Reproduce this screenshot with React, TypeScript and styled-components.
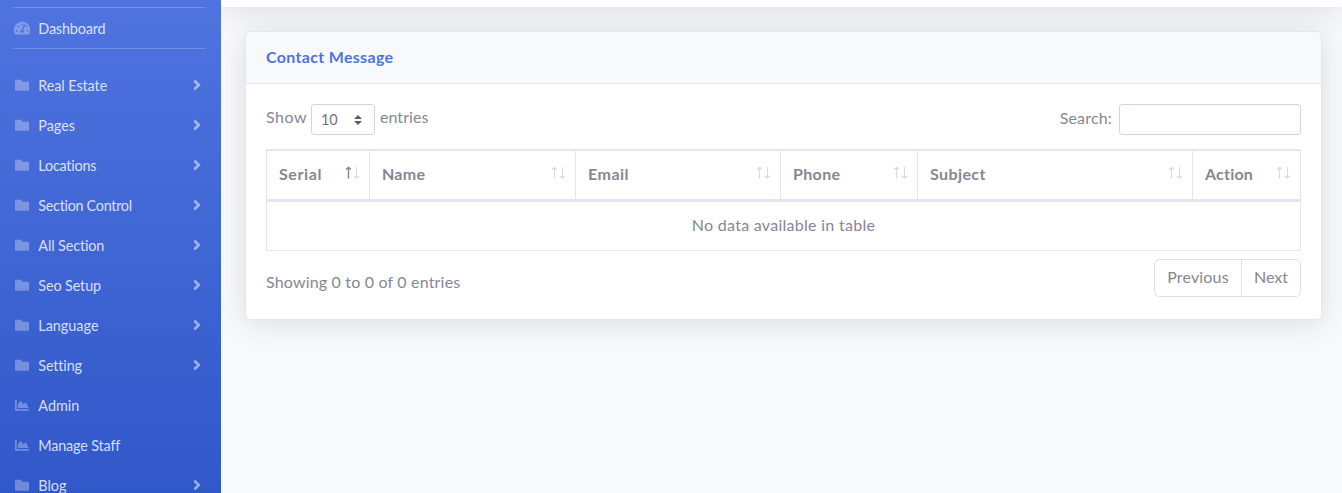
import React from 'react';
import styled, { createGlobalStyle, css } from 'styled-components';
import { FaAngleRight, FaChartArea, FaFolder, FaTachometerAlt } from 'react-icons/fa';

const GlobalStyle = createGlobalStyle`
  *, *::before, *::after { box-sizing: border-box; }
  body {
    margin: 0;
    background: #f8f9fc;
    color: #858796;
    font: 400 16px/24px Lato, 'Open Sans', sans-serif;
    font-variant-ligatures: none;
    overflow: hidden;
  }
`;

const Page = styled.div`
  display: flex;
  height: 493px;
  overflow: hidden;
`;

const Sidebar = styled.nav`
  flex: 0 0 221px;
  padding: 7px 0 0;
  background: linear-gradient(180deg, #4e73df 17px, #224abe 737px);
`;

const Divider = styled.hr<{ $gap?: number }>`
  height: 1px;
  margin: 0 16px ${p => p.$gap ?? 0}px 13px;
  border: 0;
  background: rgba(255, 255, 255, 0.2);
`;

const NavItem = styled.a<{ $tracking?: number }>`
  display: flex;
  align-items: center;
  height: 40px;
  padding: 0 16px 0 13px;
  color: rgba(255, 255, 255, 0.8);
  font-size: 14.4px;
  line-height: 20px;
  letter-spacing: ${p => p.$tracking ?? 0}px;
`;

const NavLabel = styled.span`
  padding-top: 1px;
`;

const NavIcon = styled.span<{ $size?: number }>`
  display: flex;
  justify-content: center;
  width: 18px;
  margin-right: 7.3px;
  color: rgba(255, 255, 255, 0.3);
  font-size: ${p => p.$size ?? 14.6}px;
`;

const Chevron = styled(FaAngleRight)`
  margin-left: auto;
  color: rgba(255, 255, 255, 0.5);
  stroke: rgba(255, 255, 255, 0.15);
  stroke-width: 14px;
  font-size: 16px;
`;

const Content = styled.main`
  flex: 1;
  min-width: 0;
  overflow: hidden;
`;

const Topbar = styled.header`
  height: 70px;
  margin: -63px 0 24px;
  background: #fff;
  box-shadow: 0 2.4px 28px 0 rgba(58, 59, 69, 0.15);
`;

const Card = styled.section`
  height: 289px;
  margin: 0 20px 0 24px;
  border: 1px solid #e3e6f0;
  border-radius: 5.6px;
  background: #fff;
  box-shadow: 0 2.4px 28px 0 rgba(58, 59, 69, 0.15);
`;

const CardHeader = styled.h6`
  height: 52px;
  margin: 0;
  padding: 13px 20px;
  border-bottom: 1px solid #e3e6f0;
  border-radius: 4.6px 4.6px 0 0;
  background: #f8f9fc;
  color: #4e73df;
  font-size: 16px;
  font-weight: 700;
`;

const CardBody = styled.div`
  padding: 20px;
`;

const Bar = styled.div`
  display: flex;
  justify-content: space-between;
`;

const Field = styled.label`
  display: flex;
  align-items: flex-start;
  height: 45px;
`;

const Text = styled.span<{ $tracking?: number; $top?: number }>`
  margin-top: ${p => p.$top ?? 0}px;
  letter-spacing: ${p => p.$tracking ?? 0}px;
  white-space: nowrap;
`;

const control = css`
  height: 31px;
  border: 1px solid #d1d3e2;
  border-radius: 3.2px;
  background: #fff;
`;

const Select = styled.span`
  ${control}
  display: flex;
  align-items: center;
  justify-content: space-between;
  width: 64px;
  margin: 0 5px 0 4px;
  padding: 0 12px 0 9px;
  color: #6e707e;
  font-size: 14.4px;
`;

const Search = styled.input`
  ${control}
  width: 182px;
  margin-left: 7px;
`;

const Table = styled.table`
  width: 1035px;
  border: 1px solid #e3e6f0;
  border-spacing: 0;
  border-collapse: collapse;
  table-layout: fixed;
`;

const Th = styled.th<{ $w: number }>`
  width: ${p => p.$w}px;
  height: 50px;
  padding: 0 9px 1px 12px;
  border: 1px solid #e3e6f0;
  border-top-width: 2px;
  border-bottom-width: 3px;
  text-align: left;
`;

const ThInner = styled.div`
  display: flex;
  justify-content: space-between;
`;

const Arrows = styled.svg`
  margin-top: 4px;
`;

const Td = styled.td`
  height: 50px;
  padding: 0 0 1px;
  border: 1px solid #e3e6f0;
  text-align: center;
`;

const Pager = styled.div`
  display: flex;
  height: 38px;
  margin-top: 8px;
  border: 1px solid #dddfeb;
  border-radius: 5.6px;
`;

const PageLink = styled.a<{ $w: number }>`
  width: ${p => p.$w}px;
  padding-top: 5px;
  text-align: center;
  & + & { border-left: 1px solid #dddfeb; }
`;

const SortArrows = ({ active }: { active?: boolean }) => (
  <Arrows width="16" height="14" viewBox="0 0 16 14" fill="none" stroke="#858796">
    <path d="M4.5 12.5V1.5M2 3.5L4.5 1.5L7 3.5" strokeWidth={active ? 1.4 : 1.2} opacity={active ? 1 : 0.3} />
    <path d="M12.5 1V12M10 10L12.5 12L15 10" strokeWidth="1.2" opacity="0.3" />
  </Arrows>
);

const items = [
  { label: 'Real Estate', tracking: -0.08, folder: true },
  { label: 'Pages', tracking: 0, folder: true },
  { label: 'Locations', tracking: -0.22, folder: true },
  { label: 'Section Control', tracking: -0.3, folder: true },
  { label: 'All Section', tracking: -0.12, folder: true },
  { label: 'Seo Setup', tracking: -0.12, folder: true },
  { label: 'Language', tracking: 0, folder: true },
  { label: 'Setting', tracking: -0.15, folder: true },
  { label: 'Admin', tracking: 0, folder: false },
  { label: 'Manage Staff', tracking: -0.17, folder: false },
  { label: 'Blog', tracking: 0, folder: true },
];

const columns = [
  { label: 'Serial', width: 103, tracking: 0.6 },
  { label: 'Name', width: 206, tracking: 0.25 },
  { label: 'Email', width: 205, tracking: 0.5 },
  { label: 'Phone', width: 137, tracking: 0.35 },
  { label: 'Subject', width: 275, tracking: 0.4 },
  { label: 'Action', width: 108, tracking: 0.2 },
];

export default function App() {
  return (
    <Page>
      <GlobalStyle />
      <Sidebar>
        <Divider />
        <NavItem $tracking={-0.17}>
          <NavIcon $size={16.2}><FaTachometerAlt /></NavIcon>
          <NavLabel>Dashboard</NavLabel>
        </NavItem>
        <Divider $gap={16} />
        {items.map(i => (
          <NavItem key={i.label} $tracking={i.tracking}>
            <NavIcon>{i.folder ? <FaFolder /> : <FaChartArea />}</NavIcon>
            <NavLabel>{i.label}</NavLabel>
            {i.folder && <Chevron />}
          </NavItem>
        ))}
      </Sidebar>
      <Content>
        <Topbar />
        <Card>
          <CardHeader><Text $tracking={0.32}>Contact Message</Text></CardHeader>
          <CardBody>
            <Bar>
              <Field>
                <Text $tracking={0.5} $top={1}>Show</Text>
                <Select>
                  10
                  <svg width="8" height="10" viewBox="0 0 4 5" fill="#5a5c69"><path d="M2 0L0 2h4zm0 5L0 3h4z" /></svg>
                </Select>
                <Text $tracking={0.05} $top={1}>entries</Text>
              </Field>
              <Field><Text $tracking={0.18} $top={2}>Search:</Text><Search /></Field>
            </Bar>
            <Table>
              <thead>
                <tr>
                  {columns.map((c, n) => (
                    <Th key={c.label} $w={c.width}>
                      <ThInner><Text $tracking={c.tracking}>{c.label}</Text><SortArrows active={n === 0} /></ThInner>
                    </Th>
                  ))}
                </tr>
              </thead>
              <tbody><tr><Td colSpan={6}><Text $tracking={0.28}>No data available in table</Text></Td></tr></tbody>
            </Table>
            <Bar>
              <Text $tracking={0.18} $top={19}>Showing 0 to 0 of 0 entries</Text>
              <Pager>
                <PageLink $w={86}><Text $tracking={0.15}>Previous</Text></PageLink>
                <PageLink $w={59}><Text>Next</Text></PageLink>
              </Pager>
            </Bar>
          </CardBody>
        </Card>
      </Content>
    </Page>
  );
}
